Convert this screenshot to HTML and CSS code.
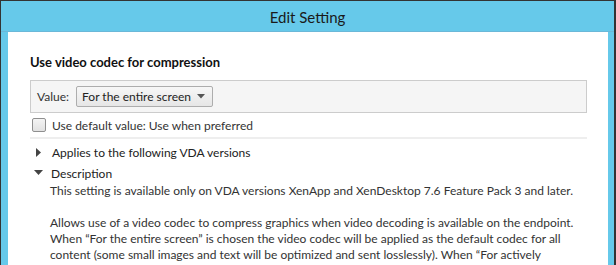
FILE: index.html
```html
<!DOCTYPE html>
<html lang="en">
<head>
  <meta charset="UTF-8" />
  <title>Edit Setting</title>
  <link rel="stylesheet" href="styles.css">
</head>
<body>
  <div class="window">
    <div class="titlebar">Edit Setting</div>

    <div class="content">
      <h2 class="setting-name">Use video codec for compression</h2>

      <div class="value-panel">
        <span class="value-label">Value:</span>
        <div class="select">
          For the entire screen
          <svg class="caret" width="8" height="5" viewBox="0 0 8 5"><path d="M0 0H8L4 4.5Z" fill="#555"/></svg>
        </div>
      </div>

      <label class="check">
        <span class="check-box"></span>
        Use default value: Use when preferred
      </label>

      <div class="section">
        <svg class="arrow" width="8" height="9" viewBox="0 0 8 9"><path d="M1 0L6 4.5L1 9Z" fill="#444"/></svg>
        Applies to the following VDA versions
      </div>

      <div class="section open">
        <svg class="arrow" width="9" height="8" viewBox="0 0 9 8"><path d="M0 1H9L4.5 6Z" fill="#444"/></svg>
        Description
      </div>

      <div class="description">
        <p>This setting is available only on VDA versions XenApp and XenDesktop 7.6 Feature Pack 3 and later.</p>
        <p>Allows use of a video codec to compress graphics when video decoding is available on the endpoint.
        When “For the entire screen” is chosen the video codec will be applied as the default codec for all
        content (some small images and text will be optimized and sent losslessly). When “For actively
        changing regions” is selected the video codec will only be used for areas that are constantly changing on the</p>
      </div>
    </div>
  </div>
</body>
</html>
```

FILE: styles.css
```css
html, body {
  margin: 0;
  height: 100%;
  overflow: hidden;
}

body {
  font-family: Lato, "Noto Sans", sans-serif;
  color: #222;
  background: #333;
}

.window {
  height: 100%;
  margin: 1px 2px 0 1px;
  background: #66c9ea;
  display: flex;
  flex-direction: column;
}

.titlebar {
  flex-shrink: 0;
  height: 29px;
  border-bottom: 1px solid #6bb8d8;
  display: flex;
  align-items: center;
  justify-content: center;
  font-size: 15px;
  color: #1a1a1a;
  padding-top: 1px;
}

.content {
  flex: 1;
  min-height: 0;
  overflow: hidden;
  background: #fff;
  margin: 0 6px 0 7px;
  padding: 21px 21px 0 22px;
}

.setting-name {
  margin: 0 0 9px;
  font-size: 13px;
  font-weight: bold;
  color: #111;
  line-height: 18px;
}

.value-panel {
  height: 31px;
  background: #f5f5f5;
  border: 1px solid #ccc;
  display: flex;
  align-items: center;
  gap: 7px;
  padding: 0 6px;
  font-size: 12px;
}

.value-label {
  color: #333;
}

.select {
  height: 19px;
  display: flex;
  align-items: center;
  gap: 6px;
  padding: 0 7px 0 5px;
  border: 1px solid #adadad;
  border-radius: 2px;
  background: linear-gradient(#f7f7f7, #e6e6e6);
  color: #222;
}

.check {
  display: flex;
  align-items: center;
  gap: 6px;
  height: 24px;
  font-size: 12px;
  color: #333;
  border-bottom: 2px solid #eee;
  padding-left: 2px;
}

.check-box {
  width: 12px;
  height: 12px;
  border: 1px solid #8f8f8f;
  border-radius: 2px;
  background: linear-gradient(#f4f4f4, #e2e2e2);
}

.section {
  display: flex;
  align-items: center;
  gap: 9px;
  height: 20px;
  font-size: 12px;
  color: #222;
  padding-left: 5px;
  margin-top: 3px;
}

.section.open {
  padding-left: 4px;
  gap: 8px;
  margin-top: 1px;
}

.description {
  padding-left: 20px;
  font-size: 12px;
  line-height: 16px;
  color: #333;
}

.description p {
  margin: 0 0 16px;
}
```
